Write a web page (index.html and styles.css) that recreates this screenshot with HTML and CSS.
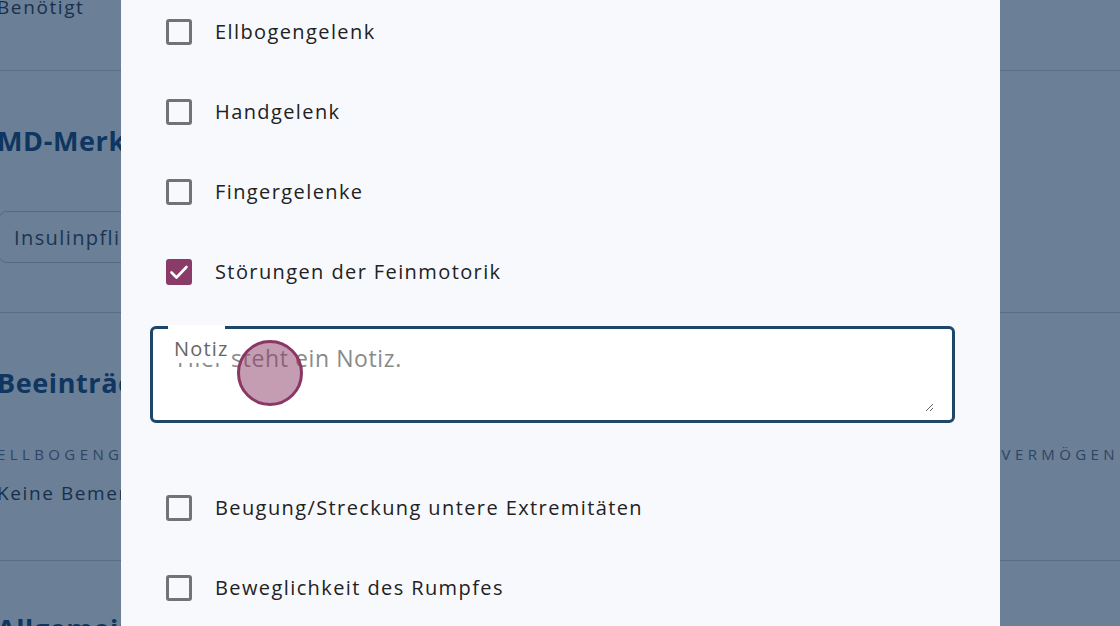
FILE: index.html
```html
<!DOCTYPE html>
<html lang="de">
<head>
<meta charset="utf-8">
<title>Beeinträchtigungen</title>
<link rel="stylesheet" href="styles.css">
</head>
<body>
<div class="page">
  <section class="sec sec-1">
    <p class="value">Benötigt</p>
  </section>
  <section class="sec sec-2">
    <h2 class="sec-title">MD-Merkmale</h2>
    <div class="chip">Insulinpflichtig</div>
  </section>
  <section class="sec sec-3">
    <h2 class="sec-title">Beeinträchtigungen</h2>
    <div class="cols">
      <div class="col">
        <div class="caps">Ellbogengelenk</div>
        <p class="value value-note">Keine Bemerkung</p>
      </div>
      <div class="col col-right">
        <div class="caps">Feinmotorisches Vermögen</div>
      </div>
    </div>
  </section>
  <section class="sec sec-4">
    <h2 class="sec-title">Allgemeinzustand</h2>
  </section>
</div>

<div class="dialog">
  <div class="dialog-body">
    <label class="option"><span class="box"></span><span class="opt-label">Ellbogengelenk</span></label>
    <label class="option"><span class="box"></span><span class="opt-label">Handgelenk</span></label>
    <label class="option"><span class="box"></span><span class="opt-label">Fingergelenke</span></label>
    <label class="option"><span class="box box-checked"><svg class="check" viewBox="0 0 26 26" width="26" height="26"><polyline points="5.5,13.5 10.5,18.5 20.5,8" fill="none" stroke="#ffffff" stroke-width="2.6" stroke-linecap="round" stroke-linejoin="round"/></svg></span><span class="opt-label">Störungen der Feinmotorik</span></label>
    <div class="note">
      <span class="note-label"><span class="note-label-text">Notiz</span></span>
      <textarea class="note-input" placeholder="Hier steht ein Notiz."></textarea>
    </div>
    <label class="option option-after"><span class="box"></span><span class="opt-label">Beugung/Streckung untere Extremitäten</span></label>
    <label class="option"><span class="box"></span><span class="opt-label">Beweglichkeit des Rumpfes</span></label>
  </div>
</div>

<div class="touch"></div>
</body>
</html>
```

FILE: styles.css
```css
* { box-sizing: border-box; }

html, body {
  margin: 0;
  padding: 0;
  width: 1120px;
  height: 626px;
  overflow: hidden;
}

body {
  background: #6b7f96;
  font-family: "Open Sans", "DejaVu Sans", sans-serif;
  color: #172f4c;
}

/* ---------- background page (dimmed) ---------- */
.page {
  margin-left: -3px;
  margin-top: -5px;
  display: flex;
  flex-direction: column;
}

.sec {
  border-bottom: 1px solid #596d84;
}

.sec-1 { padding-bottom: 51px; }
.sec-2 { padding: 54px 0 49px; }
.sec-3 { padding: 54px 0 55px; }
.sec-4 { padding: 52px 0 0; }

.value {
  margin: 0;
  font-size: 19px;
  line-height: 24px;
  letter-spacing: 1.6px;
  color: #172f4c;
}

.sec-title {
  margin: 0;
  font-size: 27px;
  line-height: 32px;
  font-weight: 700;
  letter-spacing: 0.6px;
  color: #0e3660;
}

.chip {
  margin-top: 54px;
  margin-left: 1px;
  width: 260px;
  height: 52px;
  border: 1px solid #566a81;
  border-radius: 9px;
  padding-left: 15px;
  display: flex;
  align-items: center;
  font-size: 20px;
  letter-spacing: 1.4px;
  color: #1a3552;
}

.cols {
  margin-top: 45px;
  display: flex;
  justify-content: space-between;
  padding-right: 1px;
}

.caps {
  font-size: 15px;
  line-height: 20px;
  letter-spacing: 4.4px;
  text-transform: uppercase;
  color: #2e4563;
}

.value-note { margin-top: 17px; }

.col-right { text-align: right; }

/* ---------- dialog ---------- */
.dialog {
  position: fixed;
  top: 0;
  bottom: 0;
  left: 121px;
  width: 879px;
  background: #f7f9fd;
  overflow: hidden;
}

.dialog-body {
  margin-top: -8px;
  padding: 0 45px 0 29px;
  display: flex;
  flex-direction: column;
}

.option {
  height: 80px;
  padding-left: 16px;
  display: flex;
  align-items: center;
  gap: 23px;
  cursor: pointer;
}

.option-after { margin-top: 45px; }

.box {
  width: 26px;
  height: 26px;
  flex: none;
  border: 3px solid #737373;
  border-radius: 3px;
  background: transparent;
  position: relative;
}

.box-checked {
  border-color: #8a3b68;
  background: #8a3b68;
}

.check {
  position: absolute;
  left: -3px;
  top: -3px;
}

.opt-label {
  font-size: 20px;
  line-height: 24px;
  letter-spacing: 1.4px;
  color: #222222;
}

.note {
  position: relative;
  margin-top: 14px;
  height: 97px;
  border: 3px solid #1e4668;
  border-radius: 6px;
  background: #ffffff;
  padding: 15px 18px 8px 24px;
}

.note-label {
  position: absolute;
  left: 15px;
  top: -4px;
  width: 57px;
  height: 38px;
  padding: 12px 0 0 6px;
  background: #ffffff;
  z-index: 1;
  white-space: nowrap;
}

.note-label-text {
  font-size: 20px;
  line-height: 24px;
  letter-spacing: 1.2px;
  color: #666666;
  background: #ffffff;
}

.note-input {
  display: block;
  width: 100%;
  height: 68px;
  margin: 0;
  padding: 0;
  border: none;
  outline: none;
  background: #ffffff;
  resize: vertical;
  font-family: "Open Sans", "DejaVu Sans", sans-serif;
  font-size: 23px;
  line-height: 28px;
  letter-spacing: 0.6px;
  color: #222222;
}

.note-input::placeholder {
  color: #8a8a8a;
  opacity: 1;
}

/* ---------- touch indicator ---------- */
.touch {
  position: fixed;
  left: 237px;
  top: 340px;
  width: 66px;
  height: 66px;
  border-radius: 50%;
  background: rgba(139, 59, 104, 0.5);
  border: 3px solid #8a3766;
}
```
